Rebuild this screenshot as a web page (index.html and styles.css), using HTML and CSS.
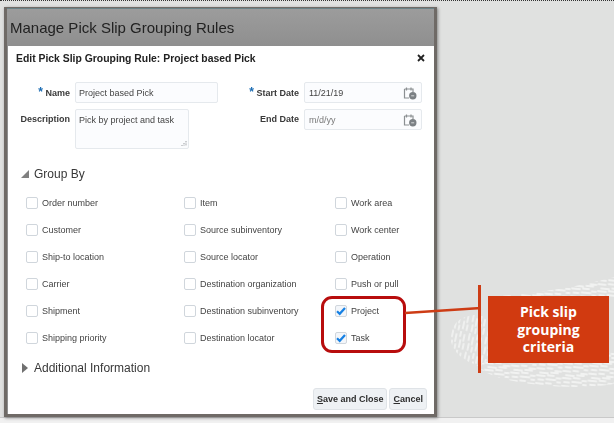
FILE: index.html
```html
<!DOCTYPE html>
<html lang="en">
<head>
<meta charset="utf-8">
<title>Manage Pick Slip Grouping Rules</title>
<link rel="stylesheet" href="styles.css">
</head>
<body>
<div class="page">
  <svg class="texture" width="174" height="153" viewBox="440 270 174 153" aria-hidden="true">
    <defs>
      <pattern id="dashV" width="17" height="19" patternUnits="userSpaceOnUse" patternTransform="rotate(12)">
        <g stroke="#f1f2f1" stroke-width="1.800" stroke-linecap="round">
          <path d="M2 1v6M6 4v7M10 0v5M14 3v6M3 11v6M7 14v4M11 9v7M15 12v5"/>
        </g>
      </pattern>
      <pattern id="dashH" width="26" height="15" patternUnits="userSpaceOnUse" patternTransform="rotate(6)">
        <g stroke="#f1f2f1" stroke-width="1.800" stroke-linecap="round">
          <path d="M1 2h8M12 1h6M21 3h4M3 6h5M11 5h9M22 7h3M1 10h7M11 9h5M19 11h6M4 14h8M15 13h7"/>
        </g>
      </pattern>
    </defs>
    <path fill="url(#dashV)" d="M468 316C486 311 496 322 496 340C496 356 486 366 474 364C458 358 448 346 451 332C453 324 460 318 468 316Z"/>
    <path fill="url(#dashH)" d="M476 366C490 360 500 352 510 352H614V384C580 390 530 386 500 378C490 375 482 371 476 366Z"/>
    <path fill="url(#dashH)" d="M488 297C530 294 575 288 614 277V297H488Z"/>
  </svg>

  <main class="window">
    <header class="window-head">
      <h1 class="window-title">Manage Pick Slip Grouping Rules</h1>
    </header>
    <section class="dialog">
      <div class="dialog-head">
        <h2 class="dialog-title">Edit Pick Slip Grouping Rule: Project based Pick</h2>
        <svg class="close" width="8" height="8" viewBox="0 0 8 8" aria-label="Close"><path d="M1 1l6 6M7 1l-6 6" stroke="#222" stroke-width="1.800"/></svg>
      </div>

      <div class="form">
        <label class="label"><span class="req">*</span> Name</label>
        <div class="input">Project based Pick</div>
        <label class="label"><span class="req">*</span> Start Date</label>
        <div class="input input-date">11/21/19
          <svg class="cal" width="14" height="14" viewBox="0 0 14 14" aria-hidden="true"><path d="M1.500 3h8.500v3M1.500 3v9h4.500M3.500 1.500v3M8 1.500v3" fill="none" stroke="#8b8f92" stroke-width="1.200"/><circle cx="9.800" cy="9.800" r="3.700" fill="#7b8084"/><path d="M8.200 9.800h3" stroke="#d5d7d9" stroke-width="1"/></svg>
        </div>
        <label class="label">Description</label>
        <div class="input input-area">Pick by project and task
          <svg class="grip" width="7" height="7" viewBox="0 0 7 7" aria-hidden="true"><path d="M6 1v5M4 3v3M2 5v1" stroke="#9a9ea2" stroke-width="1" stroke-dasharray="1 .6"/></svg>
        </div>
        <label class="label">End Date</label>
        <div class="input input-date input-hint">m/d/yy
          <svg class="cal" width="14" height="14" viewBox="0 0 14 14" aria-hidden="true"><path d="M1.500 3h8.500v3M1.500 3v9h4.500M3.500 1.500v3M8 1.500v3" fill="none" stroke="#8b8f92" stroke-width="1.200"/><circle cx="9.800" cy="9.800" r="3.700" fill="#7b8084"/><path d="M8.200 9.800h3" stroke="#d5d7d9" stroke-width="1"/></svg>
        </div>
      </div>

      <h3 class="section section-open"><span class="tri tri-open"></span>Group By</h3>
      <div class="options">
        <label class="option"><span class="box"></span>Order number</label>
        <label class="option"><span class="box"></span>Item</label>
        <label class="option"><span class="box"></span>Work area</label>
        <label class="option"><span class="box"></span>Customer</label>
        <label class="option"><span class="box"></span>Source subinventory</label>
        <label class="option"><span class="box"></span>Work center</label>
        <label class="option"><span class="box"></span>Ship-to location</label>
        <label class="option"><span class="box"></span>Source locator</label>
        <label class="option"><span class="box"></span>Operation</label>
        <label class="option"><span class="box"></span>Carrier</label>
        <label class="option"><span class="box"></span>Destination organization</label>
        <label class="option"><span class="box"></span>Push or pull</label>
        <label class="option"><span class="box"></span>Shipment</label>
        <label class="option"><span class="box"></span>Destination subinventory</label>
        <label class="option"><span class="box box-on"><svg width="10" height="10" viewBox="0 0 10 10" aria-hidden="true"><path d="M1 5.200l2.700 2.600L9 2" fill="none" stroke="#1681e4" stroke-width="2.200"/></svg></span>Project</label>
        <label class="option"><span class="box"></span>Shipping priority</label>
        <label class="option"><span class="box"></span>Destination locator</label>
        <label class="option"><span class="box box-on"><svg width="10" height="10" viewBox="0 0 10 10" aria-hidden="true"><path d="M1 5.200l2.700 2.600L9 2" fill="none" stroke="#1681e4" stroke-width="2.200"/></svg></span>Task</label>
      </div>

      <h3 class="section section-closed"><span class="tri tri-closed"></span>Additional Information</h3>

      <div class="actions">
        <button class="btn" type="button"><u>S</u>ave and Close</button>
        <button class="btn" type="button"><u>C</u>ancel</button>
      </div>
    </section>
  </main>

  <div class="highlight"></div>
  <svg class="connector" width="76" height="10" viewBox="0 0 76 10" aria-hidden="true"><path d="M0 8L76 3" stroke="#cd3c15" stroke-width="2.400"/></svg>
  <div class="bar"></div>
  <aside class="callout">Pick slip<br>grouping<br>criteria</aside>
</div>
</body>
</html>
```
FILE: styles.css
```css
* { box-sizing: border-box; }
html, body { margin: 0; padding: 0; }
body {
  width: 614px;
  height: 423px;
  overflow: hidden;
  background: #f1f1f1;
  font-family: "Liberation Sans", Arial, sans-serif;
}
.page {
  position: relative;
  width: 614px;
  height: 418px;
  padding: 7px 0 0 4px;
  background: #e0e1e0;
  border-top: 1px dotted #333;
  border-bottom: 1px solid #c9c9c9;
}
.texture { position: absolute; left: 440px; top: 269px; filter: blur(.3px); }
.window {
  position: relative;
  width: 433px;
  height: 410px;
  margin-top: -1px;
  border: 3px solid #6f6a66;
  border-top-width: 1px;
  box-shadow: 1px 1px 3px rgba(60, 60, 60, .55);
  background: #8f8f8f;
  display: flex;
  flex-direction: column;
  filter: blur(.3px);
}
.window-head {
  height: 38px;
  padding-left: 3px;
  display: flex;
  align-items: center;
  background: linear-gradient(#9c9c9c, #8f8f8f);
  border-top: 1px solid #6b8287;
}
.window-title {
  margin: 0;
  font-size: 15px;
  font-weight: 400;
  color: #222;
}
.dialog {
  flex: 1;
  margin: 0 0 0 1px;
  background: #fff;
  display: flex;
  flex-direction: column;
}
.dialog-head {
  height: 24px;
  padding: 0 9px 0 8px;
  display: flex;
  align-items: center;
  justify-content: space-between;
}
.dialog-title {
  margin: 0;
  font-size: 10.400px;
  font-weight: 700;
  color: #222;
}
.form {
  margin-top: 12px;
  display: grid;
  grid-template-columns: 62px 143px 76px 118px;
  grid-template-rows: 21px 40px;
  column-gap: 5px;
  row-gap: 6px;
}
.label {
  height: 21px;
  display: block;
  line-height: 21px;
  text-align: right;
  font-size: 9px;
  font-weight: 700;
  color: #3a3a3a;
}
.req { color: #1b6cb3; font-size: 12px; }
.input {
  position: relative;
  height: 21px;
  padding: 0 3px;
  line-height: 20px;
  font-size: 9px;
  white-space: nowrap;
  color: #444;
  background: #fbfcfe;
  border: 1px solid #e5e9ed;
  border-radius: 2px;
}
.input-area { height: 40px; width: 114px; }
.input-hint { color: #7a7a7a; }
.input-date { align-self: start; padding-left: 4px; }
.cal { position: absolute; right: 4px; top: 3px; }
.grip { position: absolute; right: 1px; bottom: 1px; }
.section {
  margin: 0;
  height: 18px;
  display: flex;
  align-items: center;
  font-size: 12px;
  font-weight: 400;
  color: #383838;
}
.section-open { margin-top: 16px; padding-left: 13px; }
.section-closed { margin-top: 8px; padding-left: 14px; }
.tri { display: block; flex: none; }
.tri-open {
  width: 8px;
  height: 8px;
  margin-right: 5px;
  background: #808080;
  clip-path: polygon(100% 0, 100% 100%, 0 100%);
}
.tri-closed {
  width: 6px;
  height: 10px;
  margin-right: 6px;
  background: #707070;
  clip-path: polygon(0 0, 100% 50%, 0 100%);
}
.options {
  margin-top: 6px;
  padding-left: 18px;
  display: grid;
  grid-template-columns: 158px 151px 90px;
  grid-auto-rows: 27px;
}
.option {
  display: flex;
  align-items: center;
  font-size: 9px;
  color: #444;
}
.box {
  width: 12px;
  height: 12px;
  margin-right: 4px;
  display: flex;
  align-items: center;
  justify-content: center;
  background: #fff;
  border: 1px solid #d0d6dc;
  border-radius: 2px;
  flex: none;
}
.box-on { background: #f3f6fa; }
.actions {
  margin-top: 11px;
  padding-right: 7px;
  display: flex;
  justify-content: flex-end;
  gap: 2px;
}
.btn {
  height: 22px;
  padding: 0 3px;
  font: 700 9px "Liberation Sans", Arial, sans-serif;
  color: #2e2e2e;
  background: #eef1f4;
  border: 1px solid #dfe3e7;
  border-radius: 3px;
}
.highlight {
  position: absolute;
  left: 321px;
  top: 295px;
  width: 85px;
  height: 57px;
  border: 3px solid #b80d0d;
  border-radius: 11px;
}
.connector { position: absolute; left: 405px; top: 304px; }
.bar {
  position: absolute;
  left: 478px;
  top: 284px;
  width: 3px;
  height: 88px;
  background: #cd3c15;
}
.callout {
  position: absolute;
  left: 488px;
  top: 295px;
  width: 121px;
  height: 67px;
  display: flex;
  align-items: center;
  justify-content: center;
  text-align: center;
  font-family: "Open Sans", sans-serif;
  font-size: 14px;
  font-weight: 700;
  line-height: 17.500px;
  color: #fff;
  background: #d13a10;
}
```
